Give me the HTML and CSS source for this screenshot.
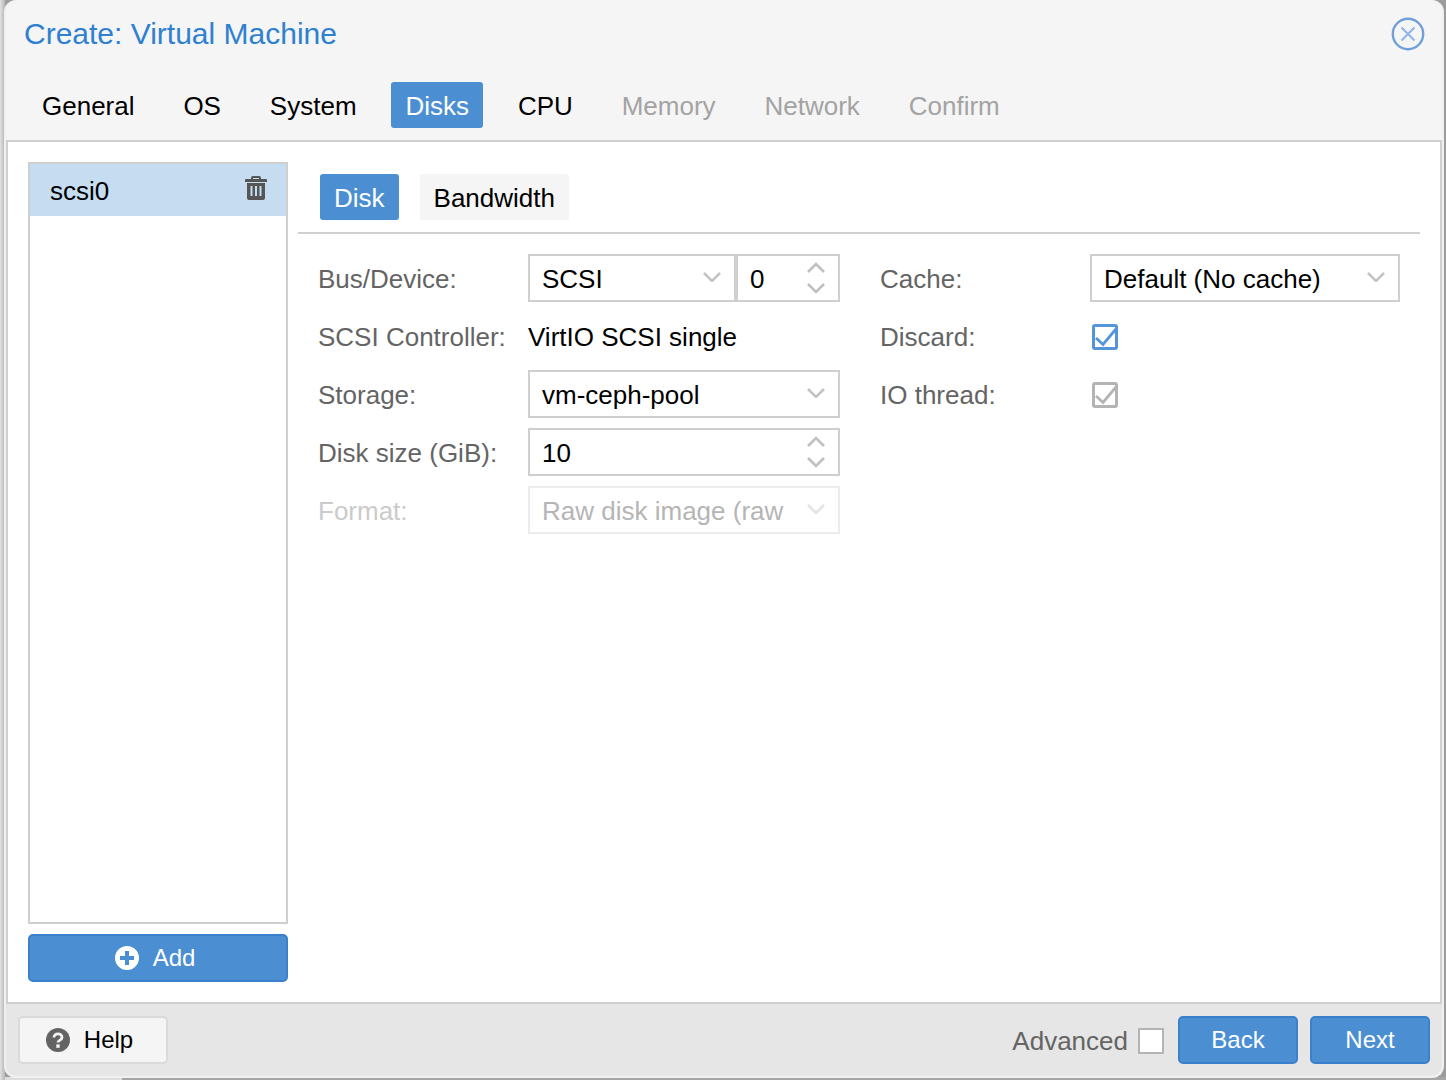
FILE: index.html
```html
<!DOCTYPE html>
<html lang="en">
<head>
<meta charset="utf-8">
<title>Create: Virtual Machine</title>
<link rel="stylesheet" href="styles.css">
</head>
<body>
<div class="window">
  <header class="head">
    <h1 class="title">Create: Virtual Machine</h1>
    <svg class="close" width="34" height="34" viewBox="0 0 34 34"><circle cx="17" cy="17" r="15.2" fill="none" stroke="#6f9fd8" stroke-width="2.4"/><path d="M10.5 10.5l13 13M23.5 10.5l-13 13" stroke="#93b6ea" stroke-width="2.2" fill="none"/></svg>
  </header>
  <nav class="tabs">
    <span class="tab">General</span>
    <span class="tab">OS</span>
    <span class="tab">System</span>
    <span class="tab active">Disks</span>
    <span class="tab">CPU</span>
    <span class="tab off">Memory</span>
    <span class="tab off">Network</span>
    <span class="tab off">Confirm</span>
  </nav>
  <main class="panel">
    <aside class="side">
      <div class="list">
        <div class="item">
          <span>scsi0</span>
          <svg class="trash" width="22" height="26" viewBox="0 0 22 26"><path fill="#555" d="M8 1h6a2 2 0 0 1 2 2v1h5a1 1 0 0 1 1 1v2H0V5a1 1 0 0 1 1-1h5V3a2 2 0 0 1 2-2zm0 2v1h6V3zM2 8h18v15a2 2 0 0 1-2 2H4a2 2 0 0 1-2-2zm3.500 3v10h2V11zm4.500 0v10h2V11zm4.500 0v10h2V11z" fill-rule="evenodd"/></svg>
        </div>
      </div>
      <button class="btn add">
        <svg width="24" height="24" viewBox="0 0 24 24"><path fill="#fff" fill-rule="evenodd" d="M12 0a12 12 0 1 1 0 24a12 12 0 0 1 0-24zM10 5v5H5v4h5v5h4v-5h5v-4h-5V5z"/></svg>
        <span>Add</span>
      </button>
    </aside>
    <section class="content">
      <div class="subtabs">
        <span class="subtab active">Disk</span>
        <span class="subtab">Bandwidth</span>
      </div>
      <div class="form">
        <div class="col">
          <div class="row">
            <label class="lbl">Bus/Device:</label>
            <div class="pair">
              <div class="field grow"><span>SCSI</span><svg class="chev" width="18" height="10" viewBox="0 0 18 10"><path d="M1 1l8 8 8-8" fill="none" stroke="#c4c4c4" stroke-width="2.600"/></svg></div>
              <div class="field small"><span>0</span><svg class="spin" width="20" height="32" viewBox="0 0 20 32"><path d="M2 10l8-8 8 8M2 22l8 8 8-8" fill="none" stroke="#c0c0c0" stroke-width="2.600"/></svg></div>
            </div>
          </div>
          <div class="row">
            <label class="lbl">SCSI Controller:</label>
            <div class="val">VirtIO SCSI single</div>
          </div>
          <div class="row">
            <label class="lbl">Storage:</label>
            <div class="field"><span>vm-ceph-pool</span><svg class="chev" width="18" height="10" viewBox="0 0 18 10"><path d="M1 1l8 8 8-8" fill="none" stroke="#c4c4c4" stroke-width="2.600"/></svg></div>
          </div>
          <div class="row">
            <label class="lbl">Disk size (GiB):</label>
            <div class="field"><span>10</span><svg class="spin" width="20" height="32" viewBox="0 0 20 32"><path d="M2 10l8-8 8 8M2 22l8 8 8-8" fill="none" stroke="#c0c0c0" stroke-width="2.600"/></svg></div>
          </div>
          <div class="row disabled">
            <label class="lbl">Format:</label>
            <div class="field"><span>Raw disk image (raw</span><svg class="chev" width="18" height="10" viewBox="0 0 18 10"><path d="M1 1l8 8 8-8" fill="none" stroke="#c4c4c4" stroke-width="2.600"/></svg></div>
          </div>
        </div>
        <div class="col">
          <div class="row">
            <label class="lbl">Cache:</label>
            <div class="field"><span>Default (No cache)</span><svg class="chev" width="18" height="10" viewBox="0 0 18 10"><path d="M1 1l8 8 8-8" fill="none" stroke="#c4c4c4" stroke-width="2.600"/></svg></div>
          </div>
          <div class="row">
            <label class="lbl">Discard:</label>
            <svg class="check" width="28" height="28" viewBox="0 0 28 28"><rect x="2.500" y="2.500" width="23" height="23" rx="1.500" fill="none" stroke="#5495d8" stroke-width="3"/><path d="M5 15l7 6.500L25 6" fill="none" stroke="#5495d8" stroke-width="2.800"/></svg>
          </div>
          <div class="row">
            <label class="lbl">IO thread:</label>
            <svg class="check" width="28" height="28" viewBox="0 0 28 28"><rect x="2.500" y="2.500" width="23" height="23" rx="1.500" fill="none" stroke="#b4b4b4" stroke-width="3"/><path d="M5 15l7 6.500L25 6" fill="none" stroke="#b4b4b4" stroke-width="2.800"/></svg>
          </div>
        </div>
      </div>
    </section>
  </main>
  <footer class="foot">
    <button class="btn help">
      <svg width="24" height="24" viewBox="0 0 24 24"><circle cx="12" cy="12" r="12" fill="#636363"/><path d="M8 9.500a4 3.700 0 0 1 8 0c0 2.800-4 2.500-4 5" fill="none" stroke="#f4f4f4" stroke-width="2.800"/><rect x="10.300" y="16.400" width="3.400" height="3.400" fill="#f4f4f4"/></svg>
      <span>Help</span>
    </button>
    <span class="spacer"></span>
    <span class="adv">Advanced</span>
    <span class="box"></span>
    <button class="btn nav">Back</button>
    <button class="btn nav">Next</button>
  </footer>
</div>
</body>
</html>
```
FILE: styles.css
```css
* { box-sizing: border-box; }
html, body { margin: 0; height: 1080px; overflow: hidden; }
body {
  background:
    linear-gradient(90deg, #e2e2e2, #bdbdbd 4px, #bdbdbd 5px) left top / 5px 100% no-repeat,
    linear-gradient(90deg, #dedede, #dedede 122px, #a6a6a6 122px) left bottom / 100% 3px no-repeat,
    #9c9c9c;
  font-family: "Liberation Sans", Arial, sans-serif;
  font-size: 26px;
  color: #000;
  padding: 0 2px 2px 4px;
}
.window { height: 1078px; background: #f5f5f5; border: 2px solid #f0f0f0; border-top: 0; border-radius: 12px; display: flex; flex-direction: column; overflow: hidden; }
.head { height: 82px; display: flex; justify-content: space-between; padding: 17px 17px 0 18px; }
.title { margin: 0; font-size: 30px; line-height: 34px; font-weight: 400; color: #2f80d0; }
.close { display: block; }
.tabs { height: 58px; display: flex; gap: 20.9px; padding-left: 22px; align-items: flex-start; }
.tab { height: 46px; line-height: 48px; padding: 0 14px; border-radius: 3px; }
.tab.active { background: #4b8fd2; color: #fff; }
.tab.off { color: #a3a3a3; }
.panel { flex: 1; min-height: 0; background: #fff; border: 2px solid #cfcfcf; display: flex; padding: 20px; gap: 10px; }
.side { width: 260px; flex: none; display: flex; flex-direction: column; gap: 10px; }
.list { flex: 1; border: 2px solid #cfcfcf; }
.item { height: 52px; background: #c5dcf1; display: flex; justify-content: space-between; padding: 0 19px 0 20px; align-items: center; }
.item span { padding-top: 2px; }
.trash { margin-top: -4px; }
.btn { height: 48px; font: inherit; font-size: 24px; border-radius: 5px; padding: 0; display: flex; align-items: center; justify-content: center; }
.add { background: #4b8fd2; border: 2px solid #3a80cb; color: #fff; gap: 14px; padding-right: 6px; }
.content { flex: 1; min-width: 0; display: flex; flex-direction: column; padding-top: 12px; }
.subtabs { height: 60px; display: flex; gap: 21px; padding-left: 22px; border-bottom: 2px solid #d0d0d0; }
.subtab { height: 46px; padding: 0 14px; line-height: 48px; background: #f5f5f5; border-radius: 3px; }
.subtab.active { background: #4b8fd2; color: #fff; }
.form { display: grid; grid-template-columns: 522px 520px; gap: 40px; padding: 20px 20px 0 20px; }
.col { display: flex; flex-direction: column; gap: 10px; }
.row { height: 48px; display: flex; align-items: center; }
.lbl { width: 210px; flex: none; color: #646464; padding-top: 2px; }
.val { flex: 1; padding-top: 2px; }
.pair { flex: 1; display: flex; }
.field { flex: 1; height: 48px; border: 2px solid #cfcfcf; background: #fff; display: flex; align-items: center; justify-content: space-between; padding: 0 13px 0 12px; min-width: 0; }
.field span { padding-top: 2px; }
.grow { width: 208px; flex: none; }
.small { flex: 1; }
.chev { margin-top: -2px; }
.spin { margin-right: -1px; }
.disabled .lbl { color: #cbcbcb; }
.disabled .field { border-color: #ececec; color: #b5b5b5; }
.disabled .chev { opacity: .45; }
.check { margin: 2px 0 0 1px; display: block; }
.foot { height: 72px; flex: none; background: #e6e6e6; display: flex; align-items: flex-start; padding: 12px 12px 0 12px; }
.help { width: 150px; background: #f5f5f5; border: 2px solid #dadada; gap: 14px; color: #000; padding-right: 7px; }
.spacer { flex: 1; }
.adv { line-height: 50px; color: #646464; margin-right: 10px; }
.box { width: 26px; height: 26px; margin: 12px 14px 0 0; background: #fff; border: 2px solid #b4b4b4; border-radius: 1px; }
.nav { width: 120px; background: #4b8fd2; border: 2px solid #3a80cb; color: #fff; margin-left: 12px; }
.box + .nav { margin-left: 0; }
```
